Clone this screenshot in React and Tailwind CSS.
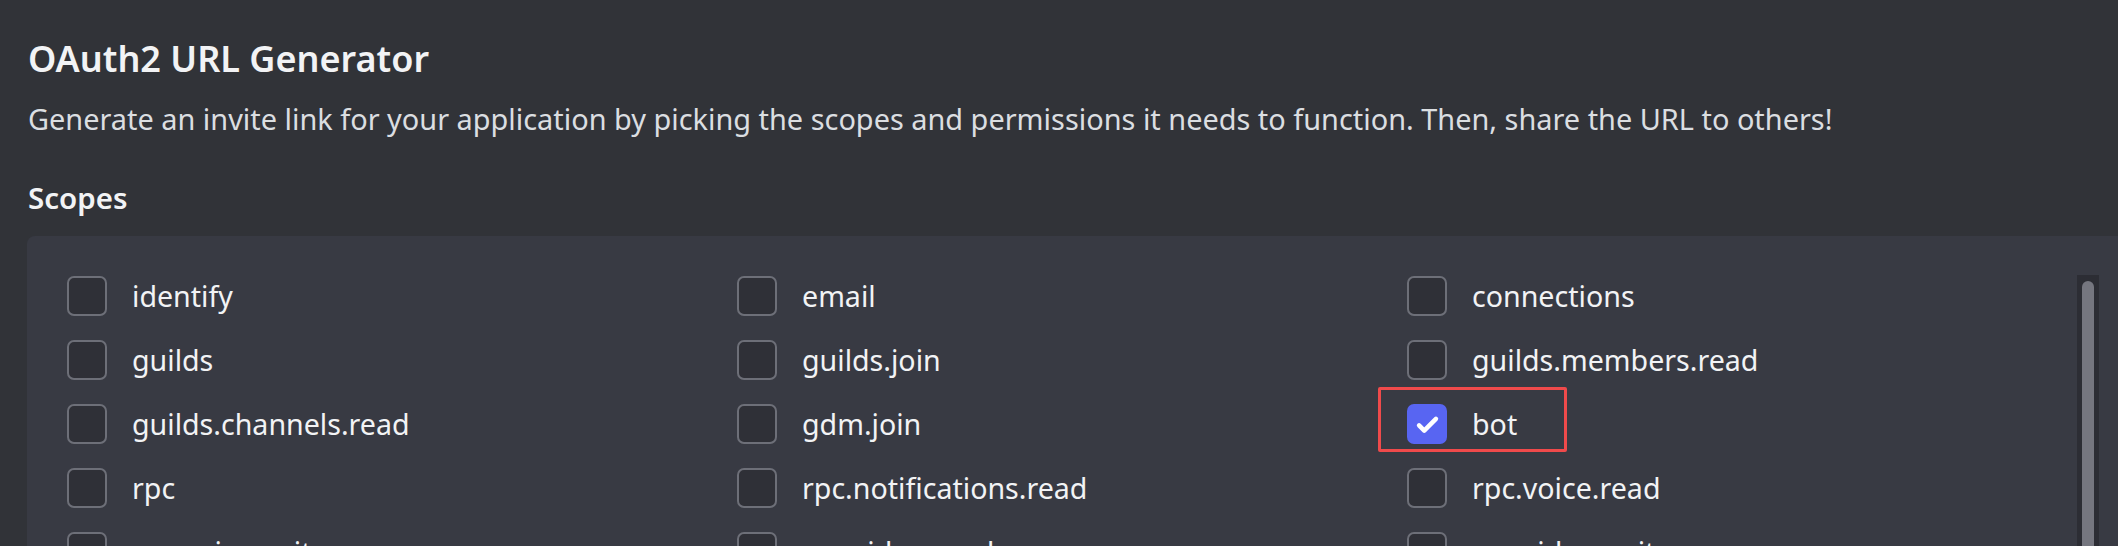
import React from "react";

const rows = [
  ["identify", "email", "connections"],
  ["guilds", "guilds.join", "guilds.members.read"],
  ["guilds.channels.read", "gdm.join", "bot"],
  ["rpc", "rpc.notifications.read", "rpc.voice.read"],
  ["rpc.voice.write", "rpc.video.read", "rpc.video.write"],
];

function Box({ checked }) {
  if (checked) {
    return (
      <div className="w-[40px] h-[40px] shrink-0 rounded-[7px] bg-[#5865f2] flex items-center justify-center">
        <svg width="27" height="27" viewBox="0 0 24 24" fill="none">
          <path d="M4.5 12.8l4.6 4.6L19.5 7" stroke="#ffffff" strokeWidth="4" strokeLinecap="round" strokeLinejoin="round" />
        </svg>
      </div>
    );
  }
  return <div className="w-[40px] h-[40px] shrink-0 rounded-[7px] border-2 border-[#6d6f78] bg-[#2f3037]" />;
}

export default function App() {
  return (
    <div
      className="w-full h-[546px] bg-[#313338] overflow-hidden flex flex-col pl-[27px]"
      style={{ fontFamily: '"Noto Sans", "Open Sans", sans-serif' }}
    >
      <div className="pl-[1px] pt-[42px]">
        <h1 className="text-[36px] leading-[34px] font-semibold text-[#f2f3f5]">
          OAuth2 URL Generator
        </h1>
        <p className="mt-[29px] text-[28.9px] leading-[27px] text-[#dbdee1]">
          Generate an invite link for your application by picking the scopes and permissions it needs to function. Then, share the URL to others!
        </p>
        <h2 className="mt-[51px] text-[29.5px] leading-[30px] font-semibold text-[#f2f3f5]">Scopes</h2>
      </div>
      <div className="mt-[23px] flex-1 flex bg-[#383a43] rounded-tl-[8px]">
        <div className="flex-1 pt-[40px] pl-[40px]">
          <div className="grid grid-cols-[670px_670px_670px] gap-y-[24px]">
            {rows.map((row, ri) =>
              row.map((label, ci) => {
                const checked = label === "bot";
                return (
                  <div key={ri + "-" + ci} className="relative flex items-center h-[40px]">
                    <Box checked={checked} />
                    <span className="ml-[25px] text-[28.6px] leading-[40px] text-[#f2f3f5] whitespace-nowrap">
                      {label}
                    </span>
                    {checked && (
                      <div className="absolute left-[-29px] top-[-17px] w-[189px] h-[65px] border-[3px] border-[#f04a4b] rounded-[2px]" />
                    )}
                  </div>
                );
              })
            )}
          </div>
        </div>
        <div className="pt-[39px] pr-[20px] flex">
          <div className="w-[22px] h-full bg-[#2c2d34] pt-[6px] flex justify-center">
            <div className="w-[12px] h-full rounded-full bg-[#75767f]" />
          </div>
        </div>
      </div>
    </div>
  );
}
